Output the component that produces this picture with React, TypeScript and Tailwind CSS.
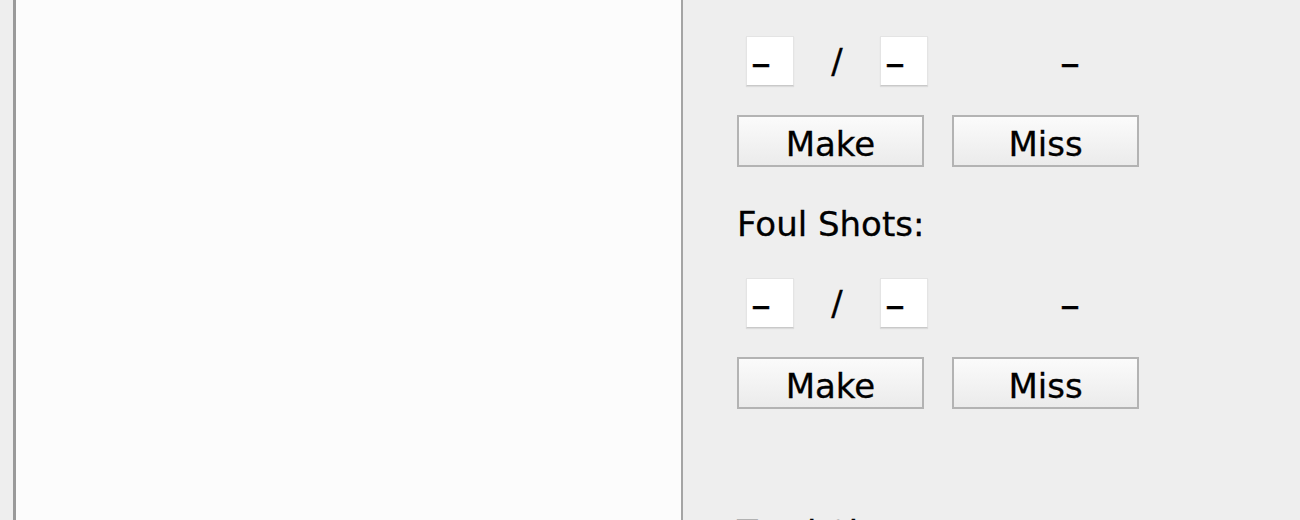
const font = { fontFamily: '"DejaVu Sans", Verdana, sans-serif' }

function Dash() {
  return <span className="text-[40px] leading-none">–</span>
}

function StatField() {
  return (
    <div className="w-[48px] h-[50px] bg-white border border-[#e4e4e4] border-b-[#c9c9c9] shadow-[0_1px_1px_rgba(0,0,0,0.08)] flex items-center pl-[4px] pt-[4px] text-black">
      <Dash />
    </div>
  )
}

function ShotRow() {
  return (
    <div className="flex items-center h-[50px] text-[34px] leading-none text-black [-webkit-text-stroke:0.3px_black]">
      <div className="ml-[9px]">
        <StatField />
      </div>
      <div className="w-[86px] flex justify-center">/</div>
      <StatField />
      <div className="ml-[132px] pt-[4px]">
        <Dash />
      </div>
    </div>
  )
}

function ActionButton({ label }: { label: string }) {
  return (
    <button className="w-[187px] h-[52px] border-2 border-[#b3b3b3] bg-gradient-to-b from-[#fbfbfb] to-[#ebebeb] text-[34px] leading-none text-black flex items-center justify-center pt-[5px] [-webkit-text-stroke:0.3px_black]">
      {label}
    </button>
  )
}

function ButtonRow() {
  return (
    <div className="flex gap-[28px] mt-[29px]">
      <ActionButton label="Make" />
      <ActionButton label="Miss" />
    </div>
  )
}

export default function App() {
  return (
    <div className="w-[1300px] h-[520px] bg-[#eeeeee] flex overflow-hidden" style={font}>
      <div className="w-[13px] shrink-0" />
      <div className="w-[670px] shrink-0 bg-[#fcfcfc] border-l-[3px] border-l-[#9a9a9a] border-r-2 border-r-[#a4a4a4]" />
      <div className="flex flex-col pl-[54px] pt-[36px]">
        <ShotRow />
        <ButtonRow />
        <div className="mt-[37px] h-[40px] leading-[40px] text-[34px] text-black [-webkit-text-stroke:0.3px_black]">Foul Shots:</div>
        <div className="mt-[34px]">
          <ShotRow />
        </div>
        <ButtonRow />
        <div className="mt-[104px] h-[40px] leading-[40px] text-[34px] text-black whitespace-nowrap [-webkit-text-stroke:0.3px_black]">Total Shots:</div>
      </div>
    </div>
  )
}
